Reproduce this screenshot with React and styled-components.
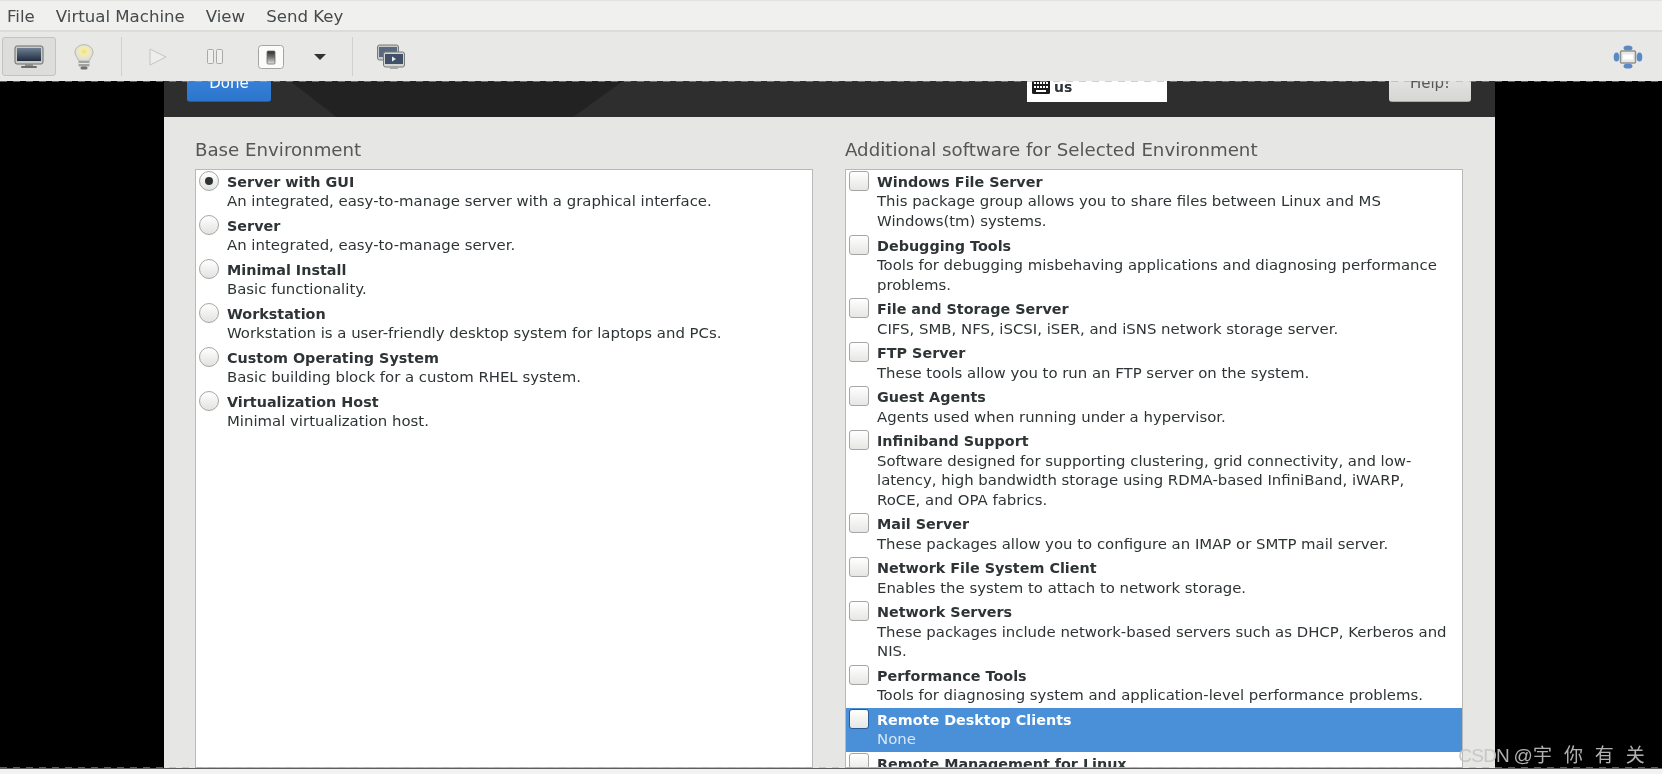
import React from 'react'
import styled, { createGlobalStyle } from 'styled-components'

const BASE_ENVIRONMENTS = [
  { title: 'Server with GUI', lines: ['An integrated, easy-to-manage server with a graphical interface.'], checked: true },
  { title: 'Server', lines: ['An integrated, easy-to-manage server.'] },
  { title: 'Minimal Install', lines: ['Basic functionality.'] },
  { title: 'Workstation', lines: ['Workstation is a user-friendly desktop system for laptops and PCs.'] },
  { title: 'Custom Operating System', lines: ['Basic building block for a custom RHEL system.'] },
  { title: 'Virtualization Host', lines: ['Minimal virtualization host.'] }
]

const ADDONS = [
  { title: 'Windows File Server', lines: ['This package group allows you to share files between Linux and MS', 'Windows(tm) systems.'] },
  { title: 'Debugging Tools', lines: ['Tools for debugging misbehaving applications and diagnosing performance', 'problems.'] },
  { title: 'File and Storage Server', lines: ['CIFS, SMB, NFS, iSCSI, iSER, and iSNS network storage server.'] },
  { title: 'FTP Server', lines: ['These tools allow you to run an FTP server on the system.'] },
  { title: 'Guest Agents', lines: ['Agents used when running under a hypervisor.'] },
  { title: 'Infiniband Support', lines: ['Software designed for supporting clustering, grid connectivity, and low-', 'latency, high bandwidth storage using RDMA-based InfiniBand, iWARP,', 'RoCE, and OPA fabrics.'] },
  { title: 'Mail Server', lines: ['These packages allow you to configure an IMAP or SMTP mail server.'] },
  { title: 'Network File System Client', lines: ['Enables the system to attach to network storage.'] },
  { title: 'Network Servers', lines: ['These packages include network-based servers such as DHCP, Kerberos and', 'NIS.'] },
  { title: 'Performance Tools', lines: ['Tools for diagnosing system and application-level performance problems.'] },
  { title: 'Remote Desktop Clients', lines: ['None'], selected: true },
  { title: 'Remote Management for Linux', lines: ['Remote management interface.'] }
]

const MonitorIcon = () => (
  <svg width='30' height='24' viewBox='0 0 30 24'>
    <defs>
      <linearGradient id='screen' x1='0' y1='0' x2='0' y2='1'>
        <stop offset='0' stopColor='#6f7f94' />
        <stop offset='1' stopColor='#1f2c3d' />
      </linearGradient>
    </defs>
    <rect x='1' y='1' width='28' height='18' rx='2' fill='#c9cbc9' stroke='#6b6e6d' />
    <rect x='3' y='3' width='24' height='13' fill='url(#screen)' />
    <rect x='11' y='19' width='8' height='2' fill='#8b8d8c' />
    <rect x='7' y='21' width='16' height='2' rx='1' fill='#6b6e6d' />
  </svg>
)

const BulbIcon = () => (
  <svg width='20' height='26' viewBox='0 0 20 26'>
    <defs>
      <radialGradient id='glow' cx='0.5' cy='0.42' r='0.55'>
        <stop offset='0' stopColor='#f8e25a' />
        <stop offset='0.38' stopColor='#f3ecb4' />
        <stop offset='1' stopColor='#dcdedb' />
      </radialGradient>
    </defs>
    <path d='M10 .7C4.800.7 1 4.300 1 8.500c0 3.500 3 5 3.600 8.500h10.800c.6-3.500 3.600-5 3.600-8.500C19 4.300 15.200.7 10 .7z' fill='url(#glow)' stroke='#b4b6b3' />
    <rect x='4.500' y='17' width='11' height='5.500' rx='1' fill='#a2a4a1' />
    <rect x='4.500' y='19' width='11' height='1' fill='#e8e8e6' />
    <rect x='6.500' y='22.500' width='7' height='3' rx='1.500' fill='#6f716f' />
  </svg>
)

const PlayIcon = () => (
  <svg width='18' height='18' viewBox='0 0 18 18'>
    <path d='M1 1l16 8-16 8z' fill='#eeeeec' stroke='#c3c5c2' strokeWidth='1' />
  </svg>
)

const PauseIcon = () => (
  <svg width='16' height='15' viewBox='0 0 16 15'>
    <rect x='0.5' y='0.5' width='6' height='14' rx='1' fill='#eeeeec' stroke='#a8aaa7' />
    <rect x='9.500' y='0.5' width='6' height='14' rx='1' fill='#eeeeec' stroke='#a8aaa7' />
  </svg>
)

const SwitchIcon = () => (
  <svg width='26' height='24' viewBox='0 0 26 24'>
    <defs>
      <linearGradient id='lever' x1='0' y1='0' x2='0' y2='1'>
        <stop offset='0' stopColor='#2c2e2d' />
        <stop offset='0.45' stopColor='#6d6f6e' />
        <stop offset='1' stopColor='#e4e4e2' />
      </linearGradient>
    </defs>
    <rect x='0.5' y='0.5' width='25' height='23' rx='3' fill='#fbfbfa' stroke='#a3a5a2' />
    <rect x='9' y='6' width='8' height='13' rx='1' fill='url(#lever)' stroke='#6a6c6b' strokeWidth='0.8' />
  </svg>
)

const ScreensIcon = () => (
  <svg width='28' height='26' viewBox='0 0 28 26'>
    <rect x='0.5' y='1' width='21' height='15' rx='2' fill='#c7c9c8' stroke='#777a79' />
    <rect x='2' y='3' width='18' height='10' fill='#5a6a7e' />
    <rect x='6.500' y='8' width='21' height='15' rx='2' fill='#d3d5d4' stroke='#777a79' />
    <rect x='8' y='10' width='18' height='10' fill='#3f5068' />
    <path d='M15 12.500l4 2.500-4 2.500z' fill='#e8ecf0' />
    <rect x='13' y='23' width='8' height='2' fill='#a5a7a6' />
  </svg>
)

const MoveIcon = () => (
  <svg width='30' height='24' viewBox='0 0 30 24'>
    <g fill='#5a8ac6'>
      <ellipse cx='15' cy='3' rx='4.500' ry='2.600' />
      <ellipse cx='15' cy='21' rx='4.500' ry='2.600' />
      <ellipse cx='3.500' cy='12' rx='2.800' ry='4.500' />
      <ellipse cx='26.500' cy='12' rx='2.800' ry='4.500' />
    </g>
    <rect x='7.500' y='6' width='15' height='12' rx='1' fill='#e8e8e6' stroke='#8f918f' strokeWidth='1.500' />
    <rect x='10' y='9.500' width='10' height='5' fill='#ffffff' />
  </svg>
)

const KeyboardIcon = () => (
  <svg width='18' height='14' viewBox='0 0 18 14'>
    <rect width='18' height='14' rx='1.500' fill='#1c1c1c' />
    <g fill='#ffffff'>
      <rect x='2' y='2' width='2' height='2' />
      <rect x='5' y='2' width='2' height='2' />
      <rect x='8' y='2' width='2' height='2' />
      <rect x='11' y='2' width='2' height='2' />
      <rect x='14' y='2' width='2' height='2' />
      <rect x='2' y='6' width='2' height='2' />
      <rect x='5' y='6' width='2' height='2' />
      <rect x='8' y='6' width='2' height='2' />
      <rect x='11' y='6' width='2' height='2' />
      <rect x='14' y='6' width='2' height='2' />
      <rect x='4' y='10' width='10' height='2' />
    </g>
  </svg>
)

const OptionRow = ({ item, kind }) => (
  <Row selected={item.selected}>
    {kind === 'radio' ? <Radio checked={item.checked} /> : <Checkbox selected={item.selected} />}
    <RowText>
      <RowTitle>{item.title}</RowTitle>
      {item.lines.map(line => (
        <RowLine key={line} selected={item.selected}>{line}</RowLine>
      ))}
    </RowText>
  </Row>
)

const App = () => (
  <Window>
    <GlobalStyle />
    <MenuBar>
      <MenuItem>File</MenuItem>
      <MenuItem>Virtual Machine</MenuItem>
      <MenuItem>View</MenuItem>
      <MenuItem>Send Key</MenuItem>
    </MenuBar>
    <ToolBar>
      <ToolButton width={54} active><MonitorIcon /></ToolButton>
      <ToolButton width={56}><BulbIcon /></ToolButton>
      <Separator />
      <ToolButton width={72}><PlayIcon /></ToolButton>
      <ToolButton width={42}><PauseIcon /></ToolButton>
      <ToolButton width={70}><SwitchIcon /></ToolButton>
      <ToolButton width={28}><Caret /></ToolButton>
      <SpacedSeparator />
      <ToolButton width={76}><ScreensIcon /></ToolButton>
      <Spacer />
      <ToolButton width={68}><MoveIcon /></ToolButton>
    </ToolBar>
    <Viewport>
      <Installer>
        <Header>
          <Backdrop />
          <DoneButton>Done</DoneButton>
          <HeaderRight>
            <KeyboardField><KeyboardIcon /><span>us</span></KeyboardField>
            <HelpButton>Help!</HelpButton>
          </HeaderRight>
        </Header>
        <Body>
          <Column>
            <Heading>Base Environment</Heading>
            <ListBox>
              {BASE_ENVIRONMENTS.map(item => (
                <OptionRow key={item.title} item={item} kind='radio' />
              ))}
            </ListBox>
          </Column>
          <Column>
            <Heading>Additional software for Selected Environment</Heading>
            <ListBox>
              {ADDONS.map(item => (
                <OptionRow key={item.title} item={item} kind='check' />
              ))}
            </ListBox>
          </Column>
        </Body>
      </Installer>
      <DashedEdge />
      <DashedEdge bottom />
    </Viewport>
    <StatusStrip />
    <Watermark><WatermarkBrand>CSDN </WatermarkBrand>@宇 你 有 关</Watermark>
  </Window>
)

const GlobalStyle = createGlobalStyle`
  html, body {
    margin: 0;
    padding: 0;
    height: 100%;
    overflow: hidden;
  }
  * {
    box-sizing: border-box;
  }
`

const Window = styled.div`
  position: relative;
  display: flex;
  flex-direction: column;
  width: 100vw;
  height: 100vh;
  overflow: hidden;
  background-color: #e8e8e6;
  font-family: 'DejaVu Sans', sans-serif;
  filter: blur(0.35px);
`

const MenuBar = styled.div`
  display: flex;
  align-items: center;
  height: 32px;
  padding: 2px 0 0 7px;
  gap: 21px;
  flex-shrink: 0;
  background-color: #f0f0ee;
  border-top: 1px solid #e2e2e0;
  border-bottom: 2px solid #dcdcda;
`

const MenuItem = styled.div`
  font-size: 16.600px;
  color: #454a4c;
`

const ToolBar = styled.div`
  display: flex;
  align-items: center;
  height: 49px;
  padding-left: 2px;
  flex-shrink: 0;
  background-color: #e8e8e6;
`

const ToolButton = styled.div`
  display: flex;
  align-items: center;
  justify-content: center;
  flex-shrink: 0;
  width: ${({ width }) => width}px;
  height: 39px;
  border-radius: 3px;
  ${({ active }) => active && 'background-color: #dddddb; border: 1px solid #c2c4c1;'}
`

const Separator = styled.div`
  width: 1px;
  height: 39px;
  margin-left: 9px;
  background-color: #d0d1ce;
  flex-shrink: 0;
`

const SpacedSeparator = styled(Separator)`
  margin-left: 18px;
`

const Spacer = styled.div`
  flex: 1;
`

const Caret = styled.div`
  width: 0;
  height: 0;
  border-left: 6px solid transparent;
  border-right: 6px solid transparent;
  border-top: 6px solid #2e3436;
`

const Viewport = styled.div`
  position: relative;
  flex: 1;
  min-height: 0;
  overflow: hidden;
  display: flex;
  justify-content: center;
  padding-right: 3px;
  background-color: #000000;
`

const Installer = styled.div`
  display: flex;
  flex-direction: column;
  width: 1331px;
  height: 100%;
  background-color: #e6e6e4;
`

const Header = styled.div`
  position: relative;
  display: flex;
  align-items: flex-end;
  justify-content: space-between;
  height: 36px;
  padding: 0 24px 15px 23px;
  flex-shrink: 0;
  overflow: hidden;
  background-color: #2e2e2e;
`

const Backdrop = styled.div`
  position: absolute;
  top: 0;
  bottom: 0;
  left: 126px;
  width: 333px;
  background-color: #222222;
  clip-path: polygon(0 0, 100% 0, 85% 100%, 14% 100%);
`

const DoneButton = styled.div`
  position: relative;
  display: flex;
  align-items: center;
  justify-content: center;
  width: 84px;
  height: 38px;
  flex-shrink: 0;
  font-size: 15px;
  color: #ffffff;
  border-radius: 3px;
  background: linear-gradient(#3f8ae0, #2b76cc);
  border-bottom: 1px solid #1c5ca8;
`

const HeaderRight = styled.div`
  position: relative;
  display: flex;
  align-items: flex-end;
  gap: 222px;
`

const KeyboardField = styled.div`
  display: flex;
  align-items: center;
  gap: 4px;
  width: 140px;
  height: 34px;
  padding: 4px 0 0 5px;
  font-size: 14px;
  font-weight: bold;
  color: #2e3436;
  background-color: #ffffff;
`

const HelpButton = styled.div`
  display: flex;
  align-items: center;
  justify-content: center;
  width: 82px;
  height: 38px;
  font-size: 15px;
  color: #555753;
  border-radius: 3px;
  background: linear-gradient(#ececea, #d6d6d4);
  border-bottom: 1px solid #a9aba8;
`

const Body = styled.div`
  flex: 1;
  min-height: 0;
  display: flex;
  gap: 32px;
  padding: 23px 32px 0 31px;
`

const Column = styled.div`
  display: flex;
  flex-direction: column;
  flex: 1;
  min-width: 0;
`

const Heading = styled.div`
  height: 29px;
  font-size: 18.200px;
  line-height: 20px;
  white-space: nowrap;
  color: #555753;
`

const ListBox = styled.div`
  flex: 1;
  min-height: 0;
  overflow: hidden;
  background-color: #ffffff;
  border: 1px solid #b9bab8;
`

const Row = styled.div`
  display: flex;
  gap: 7px;
  padding: 2px 0 2px 3px;
  color: ${({ selected }) => (selected ? '#ffffff' : '#2e3436')};
  background-color: ${({ selected }) => (selected ? '#4a90d9' : 'transparent')};
`

const Radio = styled.div`
  position: relative;
  width: 20px;
  height: 20px;
  margin: -1px 1px 0 0;
  flex-shrink: 0;
  border-radius: 50%;
  border: 1px solid #a5a7a4;
  background: linear-gradient(#ffffff, #e2e2e0);
  &::after {
    content: '';
    display: ${({ checked }) => (checked ? 'block' : 'none')};
    position: absolute;
    top: 5px;
    left: 5px;
    width: 8px;
    height: 8px;
    border-radius: 50%;
    background-color: #2e3436;
  }
`

const Checkbox = styled.div`
  width: 20px;
  height: 20px;
  flex-shrink: 0;
  margin: -1px 1px 0 0;
  border-radius: 3px;
  border: 1px solid ${({ selected }) => (selected ? '#2a5c94' : '#a5a7a4')};
  background: linear-gradient(#ffffff, #e6e6e4);
`

const RowText = styled.div`
  min-width: 0;
`

const RowTitle = styled.div`
  padding-top: 2px;
  margin-bottom: 0.800px;
  font-size: 14.350px;
  font-weight: bold;
  line-height: 17.6px;
  white-space: nowrap;
`

const RowLine = styled.div`
  font-size: 14.900px;
  line-height: 19.6px;
  white-space: nowrap;
  ${({ selected }) => selected && 'color: #d8e6f6;'}
`

const DashedEdge = styled.div`
  position: absolute;
  left: 0;
  right: 0;
  ${({ bottom }) => (bottom ? 'bottom: 0;' : 'top: 0;')}
  height: 1px;
  background: repeating-linear-gradient(90deg, rgba(170, 170, 170, 0.55) 0 7px, transparent 7px 13px);
`

const StatusStrip = styled.div`
  height: 6px;
  flex-shrink: 0;
  background-color: #f2f2f0;
  border-top: 1px solid #5e5e5e;
`

const Watermark = styled.div`
  position: absolute;
  right: 17px;
  bottom: 7px;
  font-family: 'Liberation Sans', 'Noto Sans CJK SC', sans-serif;
  font-size: 19px;
  letter-spacing: 0.3px;
  word-spacing: 6px;
  color: rgba(195, 195, 195, 0.9);
`

const WatermarkBrand = styled.span`
  letter-spacing: -0.800px;
  word-spacing: 0;
`

export default App
